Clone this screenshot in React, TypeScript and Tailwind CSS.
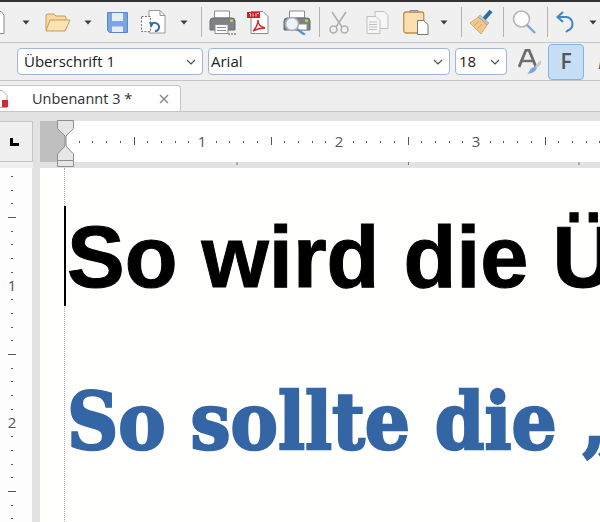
import React from "react";

const Arrow = () => (
  <svg width="8" height="5" viewBox="0 0 8 5" className="shrink-0"><path d="M0.5 0.5h7L4 4.500z" fill="#3c3c3c" /></svg>
);
const Chevron = () => (
  <svg width="10" height="6" viewBox="0 0 10 6" fill="none" className="shrink-0"><path d="M1 1l4 4 4-4" stroke="#505050" strokeWidth="1.200" /></svg>
);
const Sep = ({ ml, mr }: { ml: string; mr: string }) => <div className={`w-px h-[30px] shrink-0 bg-[#b4b4b4] ${ml} ${mr}`} />;

const NewDoc = () => (
  <svg width="5" height="23" viewBox="0 0 5 23" fill="none" className="shrink-0"><path d="M-6 .5h7l3 3.500v18.500H-6z" fill="#fff" stroke="#8a8a8a" /></svg>
);
const Folder = () => (
  <svg width="26" height="19" viewBox="0 0 26 19" fill="none" className="shrink-0">
    <path d="M1 17V3q0-2 2-2h6l2 2h8q2 0 2 2v2" fill="#f6d9a4" stroke="#c99a55" />
    <path d="M1 18l4-11h20l-5 11z" fill="#fbe2b5" stroke="#c99a55" strokeLinejoin="round" />
  </svg>
);
const Save = () => (
  <svg width="21" height="21" viewBox="0 0 21 21" className="shrink-0">
    <path d="M.5.5h20v20H2.500l-2-2z" fill="#7ba4e0" stroke="#5f86c4" />
    <rect x="5" y="1" width="11" height="8" fill="#e6edf7" />
    <rect x="5" y="14.500" width="11" height="5.500" fill="#e6edf7" />
  </svg>
);
const Template = () => (
  <svg width="25" height="24" viewBox="0 0 25 24" fill="none" className="shrink-0">
    <path d="M8 .5h11l5 5v17.500H8z" fill="#fff" stroke="#9a9a9a" />
    <path d="M19 .5v5h5" stroke="#9a9a9a" />
    <rect x=".5" y="6.500" width="9" height="15" fill="#fff" stroke="#777" strokeDasharray="2 1.500" />
    <path d="M10 14a5 5 0 0 1 8 2 4 4 0 0 1-4 5" stroke="#2d6fb0" strokeWidth="2" />
    <path d="M8 12l5 1-3 5z" fill="#2d6fb0" />
  </svg>
);
const Printer = () => (
  <svg width="27" height="25" viewBox="0 0 27 25" fill="none" className="shrink-0">
    <path d="M5.500 1h15v7h-15z" fill="#fff" stroke="#8c8c8c" />
    <path d="M1 11q0-3 3-3h19q3 0 3 3v9H1z" fill="#7c8388" stroke="#676d72" />
    <rect x="21" y="9.500" width="3" height="2.500" fill="#b5d24c" />
    <path d="M6 14.500h13v9H6z" fill="#fff" stroke="#8c8c8c" />
    <path d="M8 17.500h9M8 20.500h9" stroke="#8c8c8c" />
    <path d="M19 23h2v2h-2zM22 23h2v2h-2zM25 23h2v2h-2z" fill="#a5a5a5" />
  </svg>
);
const Pdf = () => (
  <svg width="22" height="23" viewBox="0 0 22 23" fill="none" className="shrink-0">
    <path d="M4 .5h12l5 5v17H4z" fill="#fff" stroke="#8a8a8a" />
    <rect x="0" y="1" width="13" height="6" fill="#c8252b" />
    <path d="M2 2.500h1.500v3M6 2.500v3M9 2.500v3M10 2.500h2" stroke="#fff" strokeWidth="0.800" />
    <path d="M6 20c3-2 5-8 5-11 0 4 3 7 7 8-4 0-8 1-12 3z" stroke="#d4262c" strokeWidth="1.400" />
  </svg>
);
const Preview = () => (
  <svg width="28" height="25" viewBox="0 0 28 25" fill="none" className="shrink-0">
    <path d="M6.500 1h15v7h-15z" fill="#fff" stroke="#8c8c8c" />
    <path d="M1 11q0-3 3-3h20q3 0 3 3v9H1z" fill="#7c8388" stroke="#676d72" />
    <rect x="22" y="9.500" width="3" height="2.500" fill="#b5d24c" />
    <path d="M12 14h12v6H12z" fill="#fff" stroke="#8c8c8c" />
    <circle cx="9" cy="14" r="6.500" fill="#f0f3f6" stroke="#a9b0b5" strokeWidth="1.600" />
    <path d="M14 19l8 6" stroke="#5f93cf" strokeWidth="2.400" />
  </svg>
);
const Cut = () => (
  <svg width="20" height="23" viewBox="0 0 20 23" fill="none" stroke="#b0b0b0" strokeWidth="1.600" className="shrink-0">
    <path d="M3 1l10 15M17 1L7 16" />
    <circle cx="4.500" cy="18.500" r="3.500" />
    <circle cx="15.500" cy="18.500" r="3.500" />
  </svg>
);
const Copy = () => (
  <svg width="23" height="23" viewBox="0 0 23 23" fill="#f6f6f6" stroke="#c0c0c0" className="shrink-0">
    <path d="M9 .5h9l4 4v13H9z" />
    <path d="M1 5.500h9l4 4v13H1z" />
    <path d="M3 11h8M3 13.500h8M3 16h8M3 18.500h8" fill="none" />
  </svg>
);
const Paste = () => (
  <svg width="26" height="26" viewBox="0 0 26 26" fill="none" className="shrink-0">
    <rect x=".75" y="3" width="20" height="21" rx="2.500" fill="#fbdfae" stroke="#c58d45" strokeWidth="1.300" />
    <path d="M7 3h8V1.500H7z" fill="#ddd" stroke="#8a8a8a" />
    <path d="M14.500 11.500h6l4.500 4v10H14.500z" fill="#fff" stroke="#777" />
  </svg>
);
const Brush = () => (
  <svg width="26" height="26" viewBox="0 0 26 26" fill="none" className="shrink-0">
    <path d="M15 10l7-8" stroke="#2d6d9d" strokeWidth="4" />
    <path d="M11 6l9 8-2 2-9-8z" fill="#b9c4cd" stroke="#8f9aa3" strokeWidth="0.600" />
    <path d="M9 8l9 8-6 9-11-11z" fill="#f2c98a" stroke="#c99a55" strokeWidth="0.700" />
    <path d="M5 17l5-5M8 20l5-5" stroke="#c99a55" strokeWidth="0.700" />
  </svg>
);
const Find = () => (
  <svg width="24" height="24" viewBox="0 0 24 24" fill="none" className="shrink-0">
    <circle cx="9.500" cy="9" r="8" fill="#fdfdfd" stroke="#b5b5b5" strokeWidth="1.600" />
    <path d="M15 15l8 8" stroke="#7aa6de" strokeWidth="2.400" />
  </svg>
);
const Undo = () => (
  <svg width="19" height="22" viewBox="0 0 19 22" fill="none" className="shrink-0">
    <path d="M3 6h7a7 7 0 0 1 2 13.500L10 21" stroke="#3f86c4" strokeWidth="2" />
    <path d="M7 1L1.500 6 7 11" stroke="#3f86c4" strokeWidth="2" />
  </svg>
);
const FontColor = () => (
  <svg width="24" height="26" viewBox="0 0 24 26" fill="none" className="shrink-0">
    <path d="M1 18L8 1h3l7 17" stroke="#6d6d6d" strokeWidth="2.800" />
    <path d="M4 12h11" stroke="#6d6d6d" strokeWidth="2.400" />
    <path d="M17 17l6-6v4l-4 4z" fill="#c9c9c9" />
    <path d="M8 25c2 0 3-2 4-4 1-2 3-3 5-3l2 1c-1 3-5 6-11 6z" fill="#7aa6e8" />
  </svg>
);

const Combo = ({ w, pl, label }: { w: string; pl: string; label: string }) => (
  <div className={`${w} ${pl} shrink-0 h-[27px] bg-white border border-[#9db7d9] rounded-[4px] flex items-center pr-[6px] justify-between`}>
    <span className="text-[15px] text-[#202020]">{label}</span>
    <Chevron />
  </div>
);

const HRuler = () => {
  const ticks = [];
  for (let i = 0; i < 40; i++) {
    const x = 25 + i * 13.7;
    const major = i > 0 && i % 5 === 0 && i % 10 !== 0;
    if (i % 10 === 0 && i > 0) continue;
    ticks.push(<rect key={i} x={Math.round(x)} y={major ? 16 : 20} width="1" height={major ? 8 : 2} fill="#555" />);
  }
  return (
    <svg width="560" height="41" className="block relative z-10 overflow-visible shrink-0">
      <rect width="560" height="41" fill="#fff" />
      <rect width="25" height="41" fill="#bfbfbf" />
      <rect x="196.500" y="41" width="1" height="3" fill="#777" />
      <rect x="368" y="41" width="1" height="3" fill="#777" />
      <rect x="538.500" y="41" width="1" height="3" fill="#777" />
      {ticks}
      {["1", "2", "3", "4"].map((n, i) => (
        <text key={n} x={162 + i * 137} y="26" textAnchor="middle" fontSize="15" fill="#555" fontFamily="Open Sans, sans-serif">{n}</text>
      ))}
      <path d="M17.500-.5h16v8l-7.500 7.500v10l7.500 8v6.500h-16v-6.500l7.500-8v-10l-7.500-7.500z" fill="#e6e6e6" stroke="#8e8e8e" />
      <path d="M17.500 39.500v6h16v-6" fill="#e6e6e6" stroke="#8e8e8e" />
      <path d="M17.500 39.500h16" stroke="#8e8e8e" />
    </svg>
  );
};

const VRuler = () => {
  const rows = [];
  for (let y = 176; y < 522; y += 13.7) {
    const r = Math.round(y - 168);
    const idx = Math.round((y - 149) / 13.7);
    if (idx % 10 === 0) continue;
    const major = idx % 10 === 5;
    rows.push(<rect key={y} x={major ? 8 : 11} y={r} width={major ? 8 : 2} height="1" fill="#555" />);
  }
  return (
    <svg width="32" height="354" className="block">
      {rows}
      <text x="12" y="123" textAnchor="middle" fontSize="15" fill="#555" fontFamily="Open Sans, sans-serif">1</text>
      <text x="12" y="260" textAnchor="middle" fontSize="15" fill="#555" fontFamily="Open Sans, sans-serif">2</text>
    </svg>
  );
};

export default function App() {
  return (
    <div className="w-[600px] h-[522px] overflow-hidden flex flex-col bg-[#f0f0f0] font-['Open_Sans',sans-serif]">
      <div className="h-[2px] shrink-0 bg-[#333]" />
      <div className="h-[41px] shrink-0 flex items-center border-b border-[#c6c6c6]">
        <NewDoc />
        <div className="ml-[17px]"><Arrow /></div>
        <div className="ml-[15px]"><Folder /></div>
        <div className="ml-[13px]"><Arrow /></div>
        <div className="ml-[15px]"><Save /></div>
        <div className="ml-[13px]"><Template /></div>
        <div className="ml-[14px]"><Arrow /></div>
        <Sep ml="ml-[13px]" mr="mr-[7px]" />
        <Printer />
        <div className="ml-[11px]"><Pdf /></div>
        <div className="ml-[14px]"><Preview /></div>
        <Sep ml="ml-[8px]" mr="mr-[9px]" />
        <Cut />
        <div className="ml-[17px]"><Copy /></div>
        <div className="ml-[14px]"><Paste /></div>
        <div className="ml-[11px]"><Arrow /></div>
        <Sep ml="ml-[13px]" mr="mr-[7px]" />
        <Brush />
        <Sep ml="ml-[8px]" mr="mr-[8px]" />
        <Find />
        <Sep ml="ml-[11px]" mr="mr-[8px]" />
        <Undo />
        <div className="ml-[14px]"><Arrow /></div>
      </div>
      <div className="h-[38px] shrink-0 flex items-center border-b border-[#c6c6c6]">
        <div className="w-[17px] shrink-0" />
        <Combo w="w-[186px]" pl="pl-[6px]" label="Überschrift 1" />
        <div className="w-[5px] shrink-0" />
        <Combo w="w-[242px]" pl="pl-[2px]" label="Arial" />
        <div className="w-[5px] shrink-0" />
        <Combo w="w-[52px]" pl="pl-[3px]" label="18" />
        <div className="ml-[11px]"><FontColor /></div>
        <div className="ml-[6px] w-[36px] h-[36px] shrink-0 rounded-[4px] bg-[#c6dff6] border border-[#7fb4e8] flex items-center justify-center text-[21px] font-semibold text-[#555]">F</div>
        <div className="ml-[14px] text-[21px] italic font-semibold text-[#555]">K</div>
      </div>
      <div className="h-[31px] shrink-0 flex items-end border-b border-[#c6c6c6] bg-[#eeeeee]">
        <div className="relative w-[181px] h-[27px] -mb-px bg-white border border-[#c6c6c6] rounded-tr-[4px] flex items-center border-l-0">
          <svg width="8" height="18" viewBox="0 0 8 18" className="shrink-0">
            <path d="M-6 .5h8l5 5v12H-6z" fill="#fff" stroke="#aaa" />
            <rect x="2" y="10" width="6" height="7" fill="#d8262c" />
          </svg>
          <span className="ml-[24px] text-[14.5px] text-[#303030]">Unbenannt 3 *</span>
          <svg width="10" height="10" viewBox="0 0 10 10" className="ml-[27px]" fill="none"><path d="M1 1l8 8M9 1l-8 8" stroke="#8a8a8a" strokeWidth="1.500" /></svg>
        </div>
      </div>
      <div className="h-[9px] shrink-0 bg-[#e2e2e2]" />
      <div className="h-[41px] shrink-0 flex">
        <div className="w-[33px] h-[41px] shrink-0 bg-[#f0f0f0] border border-[#c6c6c6] border-l-0 flex items-center justify-center">
          <svg width="10" height="8" viewBox="0 0 10 8" className="mr-[4px]"><path d="M1 0h3v5h6v3H1z" fill="#000" /></svg>
        </div>
        <div className="w-[7px] shrink-0 bg-[#e2e2e2]" />
        <HRuler />
      </div>
      <div className="h-[6px] shrink-0 flex bg-[#e2e2e2]">
        <div className="w-[33px] bg-[#f0f0f0]" />
      </div>
      <div className="flex-1 flex min-h-0">
        <div className="w-[32px] shrink-0 bg-[#fdfdfd]"><VRuler /></div>
        <div className="w-[8px] shrink-0 bg-[#e2e2e2]" />
        <div className="relative flex-1 bg-[#fffffe] overflow-hidden">
          <div className="absolute left-[24px] top-0 bottom-0 w-px border-l border-dotted border-[#aaaaaa]" />
          <div className="absolute left-[24px] top-[38px] h-[100px] w-[2px] bg-black" />
          <div className="pl-[27px] pt-[39px] whitespace-nowrap">
            <div className="font-['Liberation_Sans',Arial,sans-serif] font-bold text-[86.5px] leading-[100px] text-black [-webkit-text-stroke:1px_#000]">So wird die Überschrift</div>
            <div className="mt-[67px] origin-left scale-x-[0.9] font-['DejaVu_Serif',serif] font-bold text-[79px] leading-[96px] text-[#3465a4] [-webkit-text-stroke:2.5px_#3465a4]">So sollte die „Über</div>
          </div>
        </div>
      </div>
    </div>
  );
}
